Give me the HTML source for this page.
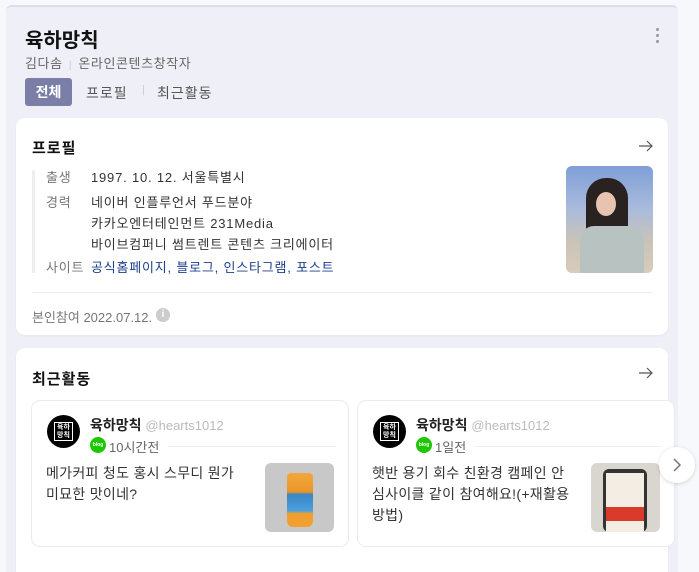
<!DOCTYPE html>
<html style="width:699px;height:572px;overflow:hidden"><head><meta charset="utf-8"><style>
*{margin:0;padding:0;box-sizing:border-box}
body{width:699px;height:572px;overflow:hidden;background:#f7f8fb;font-family:"Liberation Sans","Noto Sans CJK KR",sans-serif;position:relative;color:#222}
.panel{position:absolute;left:6px;top:5px;width:672px;height:567px;background:#eff0f7;border-radius:6px 6px 0 0;border-top:2px solid #dcdde8}
.abs{position:absolute}
.card{position:absolute;left:16px;width:652px;background:#fff;border-radius:9px;box-shadow:0 1px 2px rgba(0,0,0,.05)}
.t{position:absolute;white-space:nowrap}
.lbl{color:#777;font-size:13px;letter-spacing:.8px}
.val{color:#333;font-size:13px;letter-spacing:.8px}
.post{position:absolute;top:400px;width:318px;height:147px;background:#fff;border:1px solid #ebebeb;border-radius:9px}
.av{position:absolute;left:15px;top:14px;width:33px;height:33px;border-radius:50%;background:#000}
.av i{position:absolute;left:7px;top:7px;width:19px;height:19px;border:1px solid #fff;color:#fff;font-style:normal;font-size:7px;line-height:8px;text-align:center;font-weight:bold;padding-top:1px}
.blog{position:absolute;width:16px;height:16px;border-radius:50%;background:#1ec800;color:#fff;font-size:5px;text-align:center;line-height:16px;font-weight:bold}
</style></head><body>
<div class="panel"></div>
<div class="t" style="left:25px;top:24px;font-size:20px;font-weight:bold;color:#111">육하망칙</div>
<div class="t" style="left:25px;top:53px;font-size:13px;color:#666;letter-spacing:.6px">김다솜 <span style="color:#ccc;font-size:10px;margin:0 2px">|</span> 온라인콘텐츠창작자</div>
<div class="abs" style="left:25px;top:78px;width:47px;height:28px;background:#7b7fa8;border-radius:3px;color:#fff;font-weight:bold;font-size:14px;text-align:center;line-height:28px">전체</div>
<div class="t" style="left:86px;top:83px;font-size:14px;color:#555;letter-spacing:1px">프로필</div>
<div class="t" style="left:142px;top:84px;font-size:11px;color:#ccc">|</div>
<div class="t" style="left:157px;top:83px;font-size:14px;color:#555;letter-spacing:1px">최근활동</div>
<div class="abs" style="left:656px;top:28px;width:3px;height:3px;border-radius:50%;background:#999;box-shadow:0 6px 0 #999,0 12px 0 #999"></div>

<div class="card" style="top:118px;height:217px"></div>
<div class="t" style="left:32px;top:137px;font-size:15px;font-weight:bold;color:#111;letter-spacing:1px">프로필</div>
<svg class="abs" style="left:638px;top:139px" width="16" height="14" viewBox="0 0 16 14"><path d="M1 7H14M9 2L14 7L9 12" fill="none" stroke="#555" stroke-width="1.2"/></svg>
<div class="abs" style="left:32px;top:170px;width:3px;height:103px;background:#eee"></div>
<div class="t lbl" style="left:46px;top:167px">출생</div><div class="t val" style="left:91px;top:167px">1997. 10. 12. 서울특별시</div>
<div class="t lbl" style="left:46px;top:192px">경력</div><div class="t val" style="left:91px;top:192px">네이버 인플루언서 푸드분야</div>
<div class="t val" style="left:91px;top:213px">카카오엔터테인먼트 231Media</div>
<div class="t val" style="left:91px;top:234px">바이브컴퍼니 썸트렌트 콘텐츠 크리에이터</div>
<div class="t lbl" style="left:46px;top:257px">사이트</div><div class="t val" style="left:91px;top:257px;color:#1d3f8c">공식홈페이지, 블로그, 인스타그램, 포스트</div>
<div class="abs" style="left:566px;top:166px;width:87px;height:107px;border-radius:6px;background:linear-gradient(180deg,#7e9fd6 0%,#a9bbdc 40%,#c9c3b8 70%,#d8ccba 100%);overflow:hidden">
<div class="abs" style="left:20px;top:12px;width:42px;height:95px;border-radius:20px 20px 4px 4px;background:#2a2220"></div>
<div class="abs" style="left:30px;top:26px;width:20px;height:24px;border-radius:50%;background:#e8c4b0"></div>
<div class="abs" style="left:14px;top:60px;width:64px;height:47px;border-radius:14px 14px 0 0;background:#b8c2c0"></div>
</div>
<div class="abs" style="left:32px;top:292px;width:620px;height:1px;background:#eee"></div>
<div class="t" style="left:32px;top:307px;font-size:13px;color:#777">본인참여 2022.07.12.</div>
<div class="abs" style="left:156px;top:308px;width:14px;height:14px;border-radius:50%;background:#ccc;color:#fff;font-size:10px;text-align:center;line-height:14px;font-weight:bold">i</div>

<div class="card" style="top:348px;height:240px"></div>
<div class="t" style="left:32px;top:368px;font-size:15px;font-weight:bold;color:#111;letter-spacing:1px">최근활동</div>
<svg class="abs" style="left:638px;top:366px" width="16" height="14" viewBox="0 0 16 14"><path d="M1 7H14M9 2L14 7L9 12" fill="none" stroke="#555" stroke-width="1.2"/></svg>

<div class="post" style="left:31px">
<div class="av"><i>육하<br>망칙</i></div>
<div class="t" style="left:58px;top:14px;font-size:14px;font-weight:bold;color:#222">육하망칙 <span style="font-weight:normal;color:#bbb;font-size:13px">@hearts1012</span></div>
<div class="blog" style="left:58px;top:36px">blog</div>
<div class="t" style="left:77px;top:36px;font-size:13px;color:#666">10시간전</div>
<div class="abs" style="left:136px;top:45px;width:168px;height:1px;background:#eee"></div>
<div class="t" style="left:14px;top:62px;font-size:14px;line-height:21px;color:#333;letter-spacing:.3px">메가커피 청도 홍시 스무디 뭔가<br>미묘한 맛이네?</div>
<div class="abs" style="left:233px;top:62px;width:69px;height:69px;border-radius:6px;background:#c8c8c8;overflow:hidden">
<div class="abs" style="left:22px;top:10px;width:26px;height:54px;border-radius:4px 4px 6px 6px;background:linear-gradient(#f3a73c,#e8962a 35%,#3a86c7 40%,#4aa0dd 70%,#f0a030 75%)"></div>
</div>
</div>
<div class="post" style="left:357px">
<div class="av"><i>육하<br>망칙</i></div>
<div class="t" style="left:58px;top:14px;font-size:14px;font-weight:bold;color:#222">육하망칙 <span style="font-weight:normal;color:#bbb;font-size:13px">@hearts1012</span></div>
<div class="blog" style="left:58px;top:36px">blog</div>
<div class="t" style="left:77px;top:36px;font-size:13px;color:#666">1일전</div>
<div class="abs" style="left:116px;top:45px;width:188px;height:1px;background:#eee"></div>
<div class="t" style="left:14px;top:62px;font-size:14px;line-height:21px;color:#333;letter-spacing:.3px">햇반 용기 회수 친환경 캠페인 안<br>심사이클 같이 참여해요!(+재활용<br>방법)</div>
<div class="abs" style="left:233px;top:62px;width:69px;height:69px;border-radius:6px;background:#d9d5cf;overflow:hidden">
<div class="abs" style="left:12px;top:6px;width:44px;height:63px;border-radius:6px;background:#333"></div>
<div class="abs" style="left:15px;top:10px;width:38px;height:59px;background:#f4ede4"></div>
<div class="abs" style="left:15px;top:44px;width:38px;height:14px;background:#d93a2a"></div>
</div>
</div>
<div class="abs" style="left:659px;top:447px;width:36px;height:36px;border-radius:50%;background:#fff;box-shadow:0 1px 4px rgba(0,0,0,.15)"></div>
<svg class="abs" style="left:672px;top:457px" width="10" height="16" viewBox="0 0 10 16"><path d="M2 2L8 8L2 14" fill="none" stroke="#777" stroke-width="1.5"/></svg>
</body></html>
